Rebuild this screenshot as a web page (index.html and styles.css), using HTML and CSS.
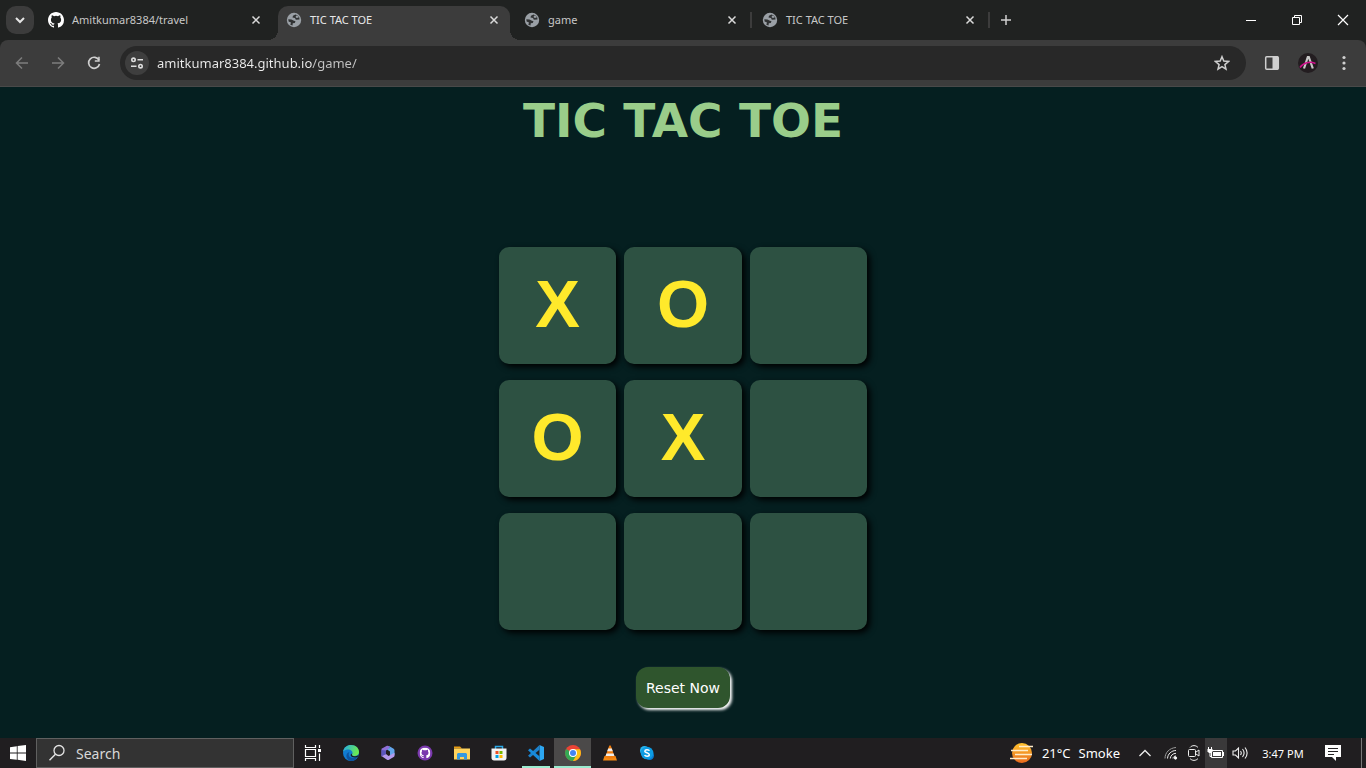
FILE: index.html
```html
<!DOCTYPE html>
<html lang="en">
<head>
<meta charset="utf-8">
<meta name="viewport" content="width=device-width, initial-scale=1">
<title>TIC TAC TOE</title>
<link rel="stylesheet" href="styles.css">
</head>
<body>
<svg class="sprite" aria-hidden="true">
  <symbol id="globe" viewBox="0 0 16 16"><circle cx="8" cy="8" r="7.200" fill="#9aa0a6"/><path d="M9.500 2.500L7 3.800 6.500 5.500 9 6 9.800 7.800 13.500 7.500 13.300 5.500 11.500 3.500zM2.300 7.300L5.500 7.500 8 8.800 9.500 9.200 8.800 11 6.800 11.300 6.500 13.500 4.300 12.700 5 10.500 2.600 9.500z" fill="#303233"/><path d="M10.300 3.500L9.500 5l1.200 1 2-.5-.8-1.500z" fill="#9aa0a6"/></symbol>
  <symbol id="x" viewBox="0 0 10 10"><path d="M1.500 1.500l7 7M8.500 1.500l-7 7" stroke="#dadada" stroke-width="1.500"/></symbol>
  <symbol id="cat" viewBox="0 0 16 16"><path fill="currentColor" d="M8 0C3.580 0 0 3.580 0 8c0 3.540 2.290 6.530 5.470 7.590.4.070.55-.17.55-.38 0-.19-.010-.82-.010-1.490-2.010.37-2.530-.49-2.690-.94-.09-.23-.48-.94-.82-1.130-.28-.15-.68-.52-.010-.53.63-.010 1.080.58 1.230.82.72 1.210 1.870.87 2.330.66.070-.52.28-.87.51-1.070-1.780-.2-3.640-.89-3.640-3.950 0-.87.31-1.590.82-2.150-.08-.2-.36-1.020.08-2.120 0 0 .67-.21 2.200.82a7.600 7.600 0 0 1 4 0c1.530-1.040 2.200-.82 2.200-.82.44 1.100.16 1.920.08 2.120.51.56.82 1.270.82 2.150 0 3.070-1.870 3.750-3.650 3.950.29.25.54.73.54 1.480 0 1.070-.010 1.930-.010 2.200 0 .21.15.46.55.38A8.010 8.010 0 0 0 16 8c0-4.420-3.580-8-8-8z"/></symbol>
</svg>

<header class="browser">
  <div class="tabstrip">
    <button class="tab-search" aria-label="Search tabs"><svg width="10" height="8" viewBox="0 0 10 8"><path d="M1 2l4 4 4-4" fill="none" stroke="#e6e6e6" stroke-width="2"/></svg></button>
    <nav class="tabs" aria-label="Tabs">
      <div class="tab"><svg class="favicon white"><use href="#cat"/></svg><a href="#travel">Amitkumar8384/travel</a><button aria-label="Close tab"><svg><use href="#x"/></svg></button></div>
      <div class="tab active"><svg class="favicon"><use href="#globe"/></svg><a href="#tic" aria-current="page">TIC TAC TOE</a><button aria-label="Close tab"><svg><use href="#x"/></svg></button></div>
      <div class="tab"><svg class="favicon"><use href="#globe"/></svg><a href="#game">game</a><button aria-label="Close tab"><svg><use href="#x"/></svg></button></div>
      <div class="tab"><svg class="favicon"><use href="#globe"/></svg><a href="#tic2">TIC TAC TOE</a><button aria-label="Close tab"><svg><use href="#x"/></svg></button></div>
    </nav>
    <button class="new-tab" aria-label="New tab"><svg width="12" height="12" viewBox="0 0 12 12"><path d="M6 1v10M1 6h10" stroke="#d0d0d0" stroke-width="1.500"/></svg></button>
    <div class="window-controls">
      <button aria-label="Minimize"><svg width="12" height="12" viewBox="0 0 12 12"><path d="M1 6.500h10" stroke="#fff"/></svg></button>
      <button aria-label="Restore"><svg width="12" height="12" viewBox="0 0 12 12"><path d="M1.500 3.500h7v7h-7zM3.500 3V1.500h7v7H9" fill="none" stroke="#fff"/></svg></button>
      <button aria-label="Close"><svg width="12" height="12" viewBox="0 0 12 12"><path d="M1 1l10 10M11 1L1 11" stroke="#fff" stroke-width="1.200"/></svg></button>
    </div>
  </div>
  <div class="toolbar">
    <div class="nav-buttons">
      <button aria-label="Back"><svg width="14" height="14" viewBox="0 0 14 14"><path d="M13 7H2M7 1.500L1.500 7 7 12.500" fill="none" stroke="#7d7d7d" stroke-width="1.500"/></svg></button>
      <button aria-label="Forward"><svg width="14" height="14" viewBox="0 0 14 14"><path d="M1 7h11M7 1.500L12.500 7 7 12.500" fill="none" stroke="#7d7d7d" stroke-width="1.500"/></svg></button>
      <button aria-label="Reload"><svg width="14" height="14" viewBox="0 0 14 14"><path d="M12 4.200A5.500 5.500 0 1 0 12.500 8" fill="none" stroke="#d0d0d0" stroke-width="1.700"/><path d="M12.700.8v5H7.800V4.300h3.400V.8z" fill="#d0d0d0"/></svg></button>
    </div>
    <div class="address">
      <button class="site-info" aria-label="Site information"><svg width="14" height="12" viewBox="0 0 14 12"><g fill="none" stroke="#dedede" stroke-width="1.600"><circle cx="3.500" cy="2.800" r="1.700"/><path d="M7.500 2.800H13M1 9.200h5.500"/><circle cx="10.500" cy="9.200" r="1.700"/></g></svg></button>
      <input class="url" type="text" aria-label="Address" value="amitkumar8384.github.io/game/">
      <button aria-label="Bookmark"><svg width="16" height="16" viewBox="0 0 16 16"><path d="M8 1.700l1.800 4.400 4.700.4-3.600 3.100 1.100 4.600L8 11.700l-4 2.500 1.100-4.600L1.500 6.500l4.700-.4z" fill="none" stroke="#cfcfcf" stroke-width="1.500"/></svg></button>
    </div>
    <div class="tools">
      <button aria-label="Side panel"><svg width="16" height="16" viewBox="0 0 16 16"><rect x="1.700" y="1.700" width="12.600" height="12.600" rx="1" fill="none" stroke="#cfcfcf" stroke-width="1.500"/><path d="M8.500 1.500H14v13H8.500z" fill="#cfcfcf"/></svg></button>
      <button aria-label="Profile"><svg width="20" height="20" viewBox="0 0 20 20"><circle cx="10" cy="10" r="10" fill="#231d20"/><path d="M6 15.500L9.800 4h1l4 11.500" fill="none" stroke="#c8c8c8" stroke-width="2.200"/><path d="M2 14.500C5 9.500 12 8 17.500 10.500" fill="none" stroke="#d0108c" stroke-width="1.500"/></svg></button>
      <button aria-label="Menu"><svg width="4" height="16" viewBox="0 0 4 16" fill="#d0d0d0"><circle cx="2" cy="2.500" r="1.600"/><circle cx="2" cy="8" r="1.600"/><circle cx="2" cy="13.500" r="1.600"/></svg></button>
    </div>
  </div>
</header>

<main class="page">
  <h1>TIC TAC TOE</h1>
  <div class="board">
    <button class="box">X</button><button class="box">O</button><button class="box" aria-label="Empty"></button>
    <button class="box">O</button><button class="box">X</button><button class="box" aria-label="Empty"></button>
    <button class="box" aria-label="Empty"></button><button class="box" aria-label="Empty"></button><button class="box" aria-label="Empty"></button>
  </div>
  <button class="reset">Reset Now</button>
</main>

<footer class="taskbar">
  <button class="start" aria-label="Start"><svg width="16" height="16" viewBox="0 0 16 16" fill="#fff"><path d="M0 2.200L6.800 1.200v6.400H0zM7.600 1.100L16 0v7.600H7.600zM0 8.400h6.800v6.400L0 13.900zM7.600 8.400H16V16l-8.400-1.200z"/></svg></button>
  <label class="search"><svg width="18" height="18" viewBox="0 0 18 18"><circle cx="11" cy="6.500" r="5" fill="none" stroke="#e4e4e4" stroke-width="1.300"/><path d="M7.400 10.200L1.500 16.300" stroke="#e4e4e4" stroke-width="1.400"/></svg><input type="text" placeholder="Search" aria-label="Search"></label>
  <div class="apps">
    <button aria-label="Task view"><svg width="18" height="18" viewBox="0 0 18 18" fill="none" stroke="#fff" stroke-width="1.200"><path d="M1.500 1v2.500h10V1M1.500 17v-2.500h10V17M1.500 5.500h10v7h-10zM15.500 1v3M15.500 9.500V17"/><path d="M14 5h3v3h-3z" fill="#fff" stroke="none"/></svg></button>
    <button aria-label="Edge"><svg width="18" height="18" viewBox="0 0 18 18"><defs><linearGradient id="eg" x2="1" y2=".3"><stop stop-color="#22a9e8"/><stop offset="1" stop-color="#6bea52"/></linearGradient></defs><circle cx="9" cy="9" r="8" fill="#107bd0"/><path d="M1 8C2 3 5 1 9 1c5 0 8 3.300 8 7 0 3-2.500 4-5 4-1.800 0-2.500-.8-1.700-2C11.500 7 8 5 5 5.500 3 6 1.500 7 1 8z" fill="url(#eg)"/><path d="M7.500 8c-2 3 0 6 3.500 6 2 0 4-.7 5-1.800-1.500 3-4 4.800-7 4.800-5-.5-6.500-8-1.500-9z" fill="#0d539f"/><path d="M10.300 9.500c-1 1-.3 2.800 2 2.800 1.700 0 3.200-.5 4.400-1.500l-.7 1.700c-2 1.500-6.700 1.300-7.300-1-.2-.9.500-1.800 1.600-2z" fill="#1d1d1d"/></svg></button>
    <button aria-label="Microsoft 365"><svg width="16" height="16" viewBox="0 0 16 16"><path d="M6.500 1L1.500 3.800V11.500L6 9V5.500L9.500 3.500V1.500C8.500.7 7.200.6 6.500 1z" fill="#8f6fd8"/><path d="M9 1l4.700 2.700c.5.400.8 1 .8 1.500v5L10 10V6.500L7 4.500 9.500 3z" fill="#62a5ea"/><path d="M1.500 11L6 9l2.500 2 6-3.200v3c0 .6-.3 1-.8 1.300L9 14.800c-.7.4-1.500.4-2 0z" fill="#b49aed"/><path d="M1.500 5v6.300L6 9V5.500z" fill="#5b55bd"/></svg></button>
    <button aria-label="GitHub Desktop"><svg width="16" height="16" viewBox="0 0 16 16"><circle cx="8" cy="8" r="7.500" fill="#7a39ad"/><svg x="2.500" y="2.500" width="11" height="11" color="#fff"><use href="#cat"/></svg></svg></button>
    <button aria-label="File Explorer"><svg width="16" height="16" viewBox="0 0 16 16"><path d="M0 1.500h6l2 2H0z" fill="#e69b13"/><path d="M0 3.500h16v11H0z" fill="#ffd45c"/><path d="M3 14.500V9l1-1h8l1 1v5.500h-3V12H6v2.500z" fill="#3499e0"/></svg></button>
    <button aria-label="Store"><svg width="16" height="16" viewBox="0 0 16 16"><path d="M4.500 4V1.500h7V4" fill="none" stroke="#2ba9e6" stroke-width="1.500"/><path d="M.5 3.500h15V13c0 1.500-1 2.500-2.500 2.500H3C1.500 15.500.5 14.500.5 13z" fill="#f3f3f3"/><path d="M4.500 6h3v3h-3z" fill="#ef5125"/><path d="M8.500 6h3v3h-3z" fill="#79b900"/><path d="M4.500 10h3v3h-3z" fill="#00a2e8"/><path d="M8.500 10h3v3h-3z" fill="#ffb900"/></svg></button>
    <button class="open" aria-label="Visual Studio Code"><svg width="18" height="18" viewBox="0 0 18 18"><path d="M12.500 1L17 3v12l-4.500 2z" fill="#2da7f2"/><path d="M12.500 1v4.800L3 13.500 1 11.800z" fill="#1c82cc"/><path d="M12.500 17v-4.800L3 4.500 1 6.200z" fill="#178bdb"/></svg></button>
    <button class="open current" aria-label="Chrome"><svg width="16" height="16" viewBox="0 0 16 16"><circle cx="8" cy="8" r="8" fill="#ea4335"/><path d="M8 8L1.100 4A8 8 0 0 0 8 16l4-6z" fill="#34a853"/><path d="M8 4.200h7A8 8 0 0 1 8 16l3.600-6z" fill="#fbc116"/><circle cx="8" cy="8" r="4" fill="#fff"/><circle cx="8" cy="8" r="3" fill="#4285f4"/></svg></button>
    <button aria-label="VLC"><svg width="16" height="16" viewBox="0 0 16 16"><path d="M2.500 11h11L15 15.500H1z" fill="#f58a13"/><path d="M7.300.5h1.400l4.300 12c-2 1.500-8 1.500-10 0z" fill="#f37d0c"/><path d="M6.200 3.500h3.600l1 2.800H5.200zM4.400 8.500h7.200l.8 2.500H3.600z" fill="#eee"/></svg></button>
    <button aria-label="Skype"><svg width="16" height="16" viewBox="0 0 16 16"><circle cx="5.500" cy="5.500" r="4.500" fill="#28b6ee"/><circle cx="10.500" cy="10.500" r="4.500" fill="#087cd2"/><circle cx="8" cy="8" r="6.300" fill="#0d9ce3"/><path d="M10.400 5.800C10 4.700 6 4.200 5.800 6.200 5.700 8 10.300 7.500 10.300 9.700c0 2-4 1.900-4.700.3" fill="none" stroke="#fff" stroke-width="1.500"/></svg></button>
  </div>
  <div class="tray">
    <button class="weather"><svg width="24" height="22" viewBox="0 0 24 22"><defs><linearGradient id="sun" x2="0" y2="1"><stop stop-color="#ffc42e"/><stop offset="1" stop-color="#e9691c"/></linearGradient></defs><circle cx="12" cy="11" r="10" fill="url(#sun)"/><path d="M9 4.500h14M1 8.500h17M5 12.500h17M0 16.500h17" stroke="#ffecc9" stroke-width="1.500"/></svg><span>21°C</span><span>Smoke</span></button>
    <button class="hidden-icons" aria-label="Show hidden icons"><svg width="14" height="8" viewBox="0 0 14 8"><path d="M1.500 7L7 1.500 12.500 7" fill="none" stroke="#eee" stroke-width="1.300"/></svg></button>
    <button aria-label="Wi-Fi"><svg width="14" height="14" viewBox="0 0 14 14" fill="none" stroke="#eee"><path d="M1 12.500C1 6.500 5.500 2 12 1.500" stroke="#999"/><path d="M3.500 12.500c.2-4.500 4-8 8.500-8M6.300 12.500c.2-3 2.700-5.200 5.700-5.200M9 12.500c0-1.500 1.500-2.500 3-2.500"/><circle cx="11.500" cy="12" r="1.200" fill="#fff"/></svg></button>
    <button aria-label="Meet Now"><svg width="14" height="18" viewBox="0 0 14 18" fill="none" stroke="#eee"><path d="M3 3.500C5 1 9 1 11 3.500M3 14.500c2 2.500 6 2.500 8 0"/><rect x="1.500" y="5.500" width="7" height="7" rx="1"/><path d="M9 8l3-2v6L9 10"/></svg></button>
    <button class="battery" aria-label="Battery"><svg width="18" height="14" viewBox="0 0 18 14"><path d="M4.500 4.500h11v7h-11zM16.500 6v4" fill="none" stroke="#fff"/><path d="M6 6h8v4H6z" fill="#fff"/><path d="M1.500 1v3M4.500 1v3M3 6v4.500h2" stroke="#fff" fill="none"/><path d="M.5 3h5v2.500L4 7H2L.5 5.500z" fill="#fff"/></svg></button>
    <button aria-label="Volume"><svg width="16" height="14" viewBox="0 0 16 14" fill="none" stroke="#eee" stroke-width="1.100"><path d="M1 5h2.500L6.500 2v10l-3-3H1zM8.500 5c1 1.300 1 2.700 0 4M10.500 3c2 2.500 2 5.500 0 8M13 1.500c2.700 3.500 2.700 7.500 0 11"/></svg></button>
    <button class="clock"><time>3:47 PM</time></button>
    <button class="notify" aria-label="Notifications"><svg width="16" height="16" viewBox="0 0 16 16"><path d="M0 0h16v12h-5v4l-4-4H0z" fill="#fff"/><path d="M3 3.500h10M3 6.500h10M3 9.500h6" stroke="#242224"/></svg></button>
  </div>
</footer>
</body>
</html>
```
FILE: styles.css
```css
* { box-sizing: border-box; }
body {
  margin: 0;
  min-height: 100vh;
  display: flex;
  flex-direction: column;
  background: #051f20;
  color: #fff;
  font-family: "Segoe UI", "Noto Sans", "Open Sans", sans-serif;
  font-size: 11px;
}
button {
  display: flex;
  align-items: center;
  justify-content: center;
  padding: 0;
  border: 0;
  background: none;
  color: inherit;
  font: inherit;
}
input { min-width: 0; padding: 0; border: 0; background: none; outline: 0; font: inherit; }
a { color: inherit; text-decoration: none; }
svg { flex: none; }
.sprite { display: none; }

.browser { background: #202221; }
.tabstrip { display: flex; align-items: center; height: 40px; padding-left: 6px; }
.tab-search { width: 28px; height: 28px; margin-right: 6px; border-radius: 10px; background: #3c3c3c; }
.tabs { display: flex; align-self: flex-end; }
.tab {
  display: flex;
  align-items: center;
  width: 238px;
  height: 34px;
  padding: 0 14px 6px 8px;
  color: #c7c7c7;
  border-radius: 10px 10px 0 0;
  position: relative;
}
.tab a { flex: 1; margin-left: 8px; white-space: nowrap; line-height: 16px; }
.tab button { width: 16px; height: 16px; }
.tab button svg { width: 10px; height: 10px; }
.favicon { width: 16px; height: 16px; }
.white { color: #fff; }
.tab.active { width: 232px; margin-right: 6px; padding-right: 8px; background: #3c3c3c; color: #e8e8e8; }
.tab.active::before, .tab.active::after {
  content: "";
  position: absolute;
  bottom: 0;
  width: 10px;
  height: 10px;
}
.tab.active::before { left: -10px; background: radial-gradient(circle at 0 0, transparent 10px, #3c3c3c 10px); }
.tab.active::after { right: -10px; background: radial-gradient(circle at 100% 0, transparent 10px, #3c3c3c 10px); }
.tab.active ~ .tab::after {
  content: "";
  position: absolute;
  right: 2px;
  top: 6px;
  width: 2px;
  height: 16px;
  background: #3c3c3c;
}
.new-tab { width: 28px; height: 28px; }
.window-controls { display: flex; margin-left: auto; }
.window-controls button { width: 46px; height: 30px; }

.toolbar {
  display: flex;
  align-items: center;
  height: 47px;
  border-radius: 8px 8px 0 0;
  border-bottom: 1px solid #494949;
  background: #3c3c3c;
  padding: 0 4px;
}
.nav-buttons { display: flex; width: 116px; }
.nav-buttons button { width: 36px; height: 28px; }
.address {
  display: flex;
  align-items: center;
  flex: 1;
  height: 34px;
  padding: 0 12px 0 5px;
  border-radius: 17px;
  background: #282828;
}
.site-info { width: 24px; height: 24px; border-radius: 50%; background: #3e3e3e; margin-right: 8px; }
.address .url {
  flex: 1;
  height: 20px;
  font-size: 13px;
  color: transparent;
  background: linear-gradient(90deg, #eee 155px, #c4c4c4 155px);
  background-clip: text;
  -webkit-background-clip: text;
}
.address button:last-child { width: 24px; height: 24px; }
.tools { display: flex; margin-left: 8px; }
.tools button { width: 36px; height: 28px; }

.page {
  flex: 1;
  display: flex;
  flex-direction: column;
  align-items: center;
  padding: 4px 16px 28px;
}
h1 {
  margin: 0 0 96px;
  color: #9acd8a;
  font: bold 47px/60px "Comic Sans MS", "DejaVu Sans", sans-serif;
}
.board {
  display: grid;
  grid-template-columns: repeat(3, 1fr);
  grid-auto-rows: 117px;
  gap: 16px 8px;
  width: 368px;
  max-width: 100%;
}
.box {
  padding-bottom: 4px;
  border-radius: 10px;
  background: #2d5142;
  box-shadow: 3px 3px 6px #000;
  color: #ffe92b;
  font: bold 67px/1 "Liberation Sans", Arial, sans-serif;
}
.reset {
  margin-top: 37px;
  padding: 11px 10px 9px;
  border-radius: 12px;
  background: #2f552d;
  box-shadow: 2px 2px 3px #fff;
  font: 14px/21px "Comic Sans MS", "DejaVu Sans", sans-serif;
}

.taskbar { display: flex; height: 30px; background: #201e20; }
.start { width: 36px; }
.search {
  display: flex;
  align-items: center;
  gap: 10px;
  width: 258px;
  padding-left: 11px;
  border: 1px solid #606060;
  background: #333;
}
.search input { flex: 1; font-size: 14px; color: #d8d8d8; }
.search input::placeholder { color: #d8d8d8; opacity: 1; }
.apps { display: flex; }
.apps button { width: 37px; }
.apps button:first-child { width: 38px; }
.open { background: linear-gradient(#9aebcf, #9aebcf) center bottom / 28px 2px no-repeat; }
.apps .current { background-color: #4b4949; background-size: 37px 2px; }
.tray { display: flex; margin-left: auto; padding-right: 4px; }
.tray button { width: 22px; }
.tray .weather { width: auto; gap: 8px; font-size: 13px; margin-right: 12px; }
.tray .hidden-icons { width: 26px; }
.tray .hidden-icons + button { width: 25px; }
.tray .battery { background: #3a393a; }
.tray .battery + button { width: 26px; }
.tray .clock { width: 60px; }
.tray .notify { width: 49px; padding-right: 8px; border-right: 1px solid #777; }
```
